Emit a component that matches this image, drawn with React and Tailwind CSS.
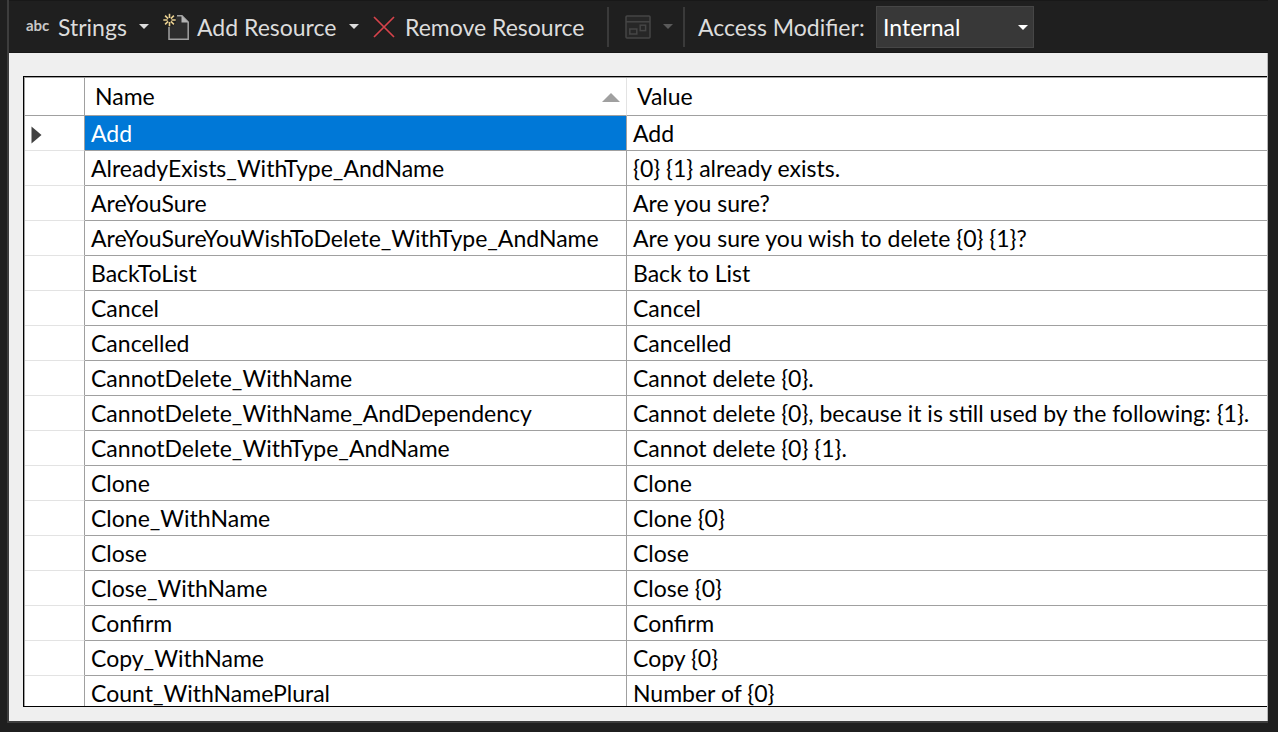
const rows = [
  ["Add", "Add"],
  ["AlreadyExists_WithType_AndName", "{0} {1} already exists."],
  ["AreYouSure", "Are you sure?"],
  ["AreYouSureYouWishToDelete_WithType_AndName", "Are you sure you wish to delete {0} {1}?"],
  ["BackToList", "Back to List"],
  ["Cancel", "Cancel"],
  ["Cancelled", "Cancelled"],
  ["CannotDelete_WithName", "Cannot delete {0}."],
  ["CannotDelete_WithName_AndDependency", "Cannot delete {0}, because it is still used by the following: {1}."],
  ["CannotDelete_WithType_AndName", "Cannot delete {0} {1}."],
  ["Clone", "Clone"],
  ["Clone_WithName", "Clone {0}"],
  ["Close", "Close"],
  ["Close_WithName", "Close {0}"],
  ["Confirm", "Confirm"],
  ["Copy_WithName", "Copy {0}"],
  ["Count_WithNamePlural", "Number of {0}"],
];

function Caret({ className = "" }) {
  return (
    <svg width="10" height="5" viewBox="0 0 10 5" className={className} aria-hidden="true">
      <path d="M0 0H10L5 5Z" fill="currentColor" />
    </svg>
  );
}

function NewFileIcon() {
  return (
    <svg width="28" height="28" viewBox="0 0 28 28" fill="none" aria-hidden="true">
      <path d="M6 12V26.2H25.2V9L19 2.8H14" fill="#2d2d2d" />
      <path d="M6 14V26.2H25.2V9L19 2.8H14" stroke="#a0a0a0" strokeWidth="1.5" />
      <path d="M18.5 2.5V9.5H25.5Z" fill="#b4b4b4" />
      <circle cx="6.5" cy="7" r="6.8" fill="#1f1f1f" />
      <path
        d="M6.5 0.8V5M6.5 9V13.2M0.3 7H4.5M8.5 7H12.7M2.1 2.6L5.1 5.6M7.9 8.4L10.9 11.4M10.9 2.6L7.9 5.6M5.1 8.4L2.1 11.4"
        stroke="#e8cf90"
        strokeWidth="1.6"
      />
    </svg>
  );
}

function RemoveIcon() {
  return (
    <svg width="22" height="22" viewBox="0 0 22 22" fill="none" aria-hidden="true">
      <path d="M1 1L21 21M21 1L1 21" stroke="#d6434b" strokeWidth="1.7" />
    </svg>
  );
}

function ViewIcon() {
  return (
    <svg width="26" height="24" viewBox="0 0 26 24" fill="none" stroke="#464646" strokeWidth="1.5" aria-hidden="true">
      <rect x="1" y="1" width="24" height="22" rx="1" fill="#272727" />
      <path d="M1 6.8H25" />
      <rect x="4.8" y="14" width="7" height="5" />
      <rect x="15.2" y="10.2" width="5.4" height="5.4" />
    </svg>
  );
}

export default function App() {
  return (
    <div className="flex h-screen overflow-hidden bg-[#1f1f1f] pr-2.5 pb-[9px] pl-[7px] font-['Lato',sans-serif] text-[23px] leading-7">
      <main className="flex min-w-0 flex-1 flex-col border-b-2 border-l-2 border-[#3d3d3d]">
        <div role="toolbar" aria-label="Resource tools" className="flex h-[53px] shrink-0 items-center border-y border-[#181818] pl-[17px] text-[#dcdcdc]">
          <button type="button" className="flex items-center">
            <span className="mb-1 w-8 text-left text-[15px] leading-5 font-bold text-[#c8c8c8]">abc</span>
            <span className="w-[81px] text-left">Strings</span>
            <Caret />
          </button>
          <button type="button" className="ml-3.5 flex items-center">
            <NewFileIcon />
            <span className="ml-1.5 w-[152px] text-left whitespace-nowrap">Add Resource</span>
            <Caret />
          </button>
          <button type="button" className="ml-3.5 flex items-center gap-2.5">
            <RemoveIcon />
            <span className="w-[182px] text-left whitespace-nowrap">Remove Resource</span>
          </button>
          <div className="ml-5 h-10 w-0.5 bg-[#3a3a3a]" />
          <button type="button" disabled aria-label="View" className="ml-4 flex items-center gap-3 text-[#5a5a5a]">
            <ViewIcon />
            <Caret />
          </button>
          <div className="ml-2.5 h-10 w-0.5 bg-[#3a3a3a]" />
          <label htmlFor="modifier" className="ml-[13px] w-[178px] whitespace-nowrap">Access Modifier:</label>
          <div className="relative text-white">
            <select id="modifier" defaultValue="Internal" className="block h-[42px] w-[158px] appearance-none border border-[#464646] bg-[#383838] pl-1.5">
              <option>Internal</option>
              <option>Public</option>
            </select>
            <Caret className="pointer-events-none absolute top-[19px] right-1.5" />
          </div>
        </div>

        <div className="flex min-h-0 flex-1 flex-col border-r border-[#b8b8b8] bg-[#efefef] pt-[23px] pb-3.5 pl-3.5">
          <div className="min-h-0 flex-1 overflow-hidden border-y border-l border-black bg-white text-black">
            <div className="border-t border-l border-[#a0a0a0]">
              <table className="w-full table-fixed border-separate border-spacing-0 text-left">
                <colgroup>
                  <col className="w-[60px]" />
                  <col className="w-[542px]" />
                  <col />
                </colgroup>
                <thead>
                  <tr className="h-[38px]">
                    <th aria-label="Row selector" className="border-r border-b border-[#a0a0a0] p-0" />
                    <th aria-sort="ascending" className="border-r border-b border-r-[#e3e3e3] border-b-[#a0a0a0] pt-0 pr-1.5 pb-0.5 pl-2.5 font-normal">
                      <div className="flex items-center justify-between">
                        Name
                        <svg width="18" height="9" viewBox="0 0 18 9" className="mt-1" aria-hidden="true">
                          <path d="M0 9L9 0L18 9Z" fill="#a0a0a0" />
                        </svg>
                      </div>
                    </th>
                    <th className="border-b border-[#a0a0a0] pt-0 pb-0.5 pl-2.5 font-normal">Value</th>
                  </tr>
                </thead>
                <tbody>
                  {rows.map(([name, value], i) => (
                    <tr key={name} className="h-[35px]">
                      <td className="border-r border-b border-r-[#a0a0a0] border-b-[#e3e3e3] pt-1 pr-0 pb-0 pl-1.5">
                        {i === 0 && (
                          <svg width="11" height="18" viewBox="0 0 11 18" aria-hidden="true">
                            <path d="M0.5 0.5V17.5L10.5 9Z" fill="#404040" />
                          </svg>
                        )}
                      </td>
                      <td className={`border-r border-b border-[#a0a0a0] py-0 pr-0 pl-1.5 whitespace-nowrap ${i === 0 ? "bg-[#0078d7] text-white" : ""}`}>
                        {name}
                      </td>
                      <td className="border-b border-[#a0a0a0] py-0 pr-0 pl-1.5 whitespace-nowrap">{value}</td>
                    </tr>
                  ))}
                </tbody>
              </table>
            </div>
          </div>
        </div>
      </main>
    </div>
  );
}
